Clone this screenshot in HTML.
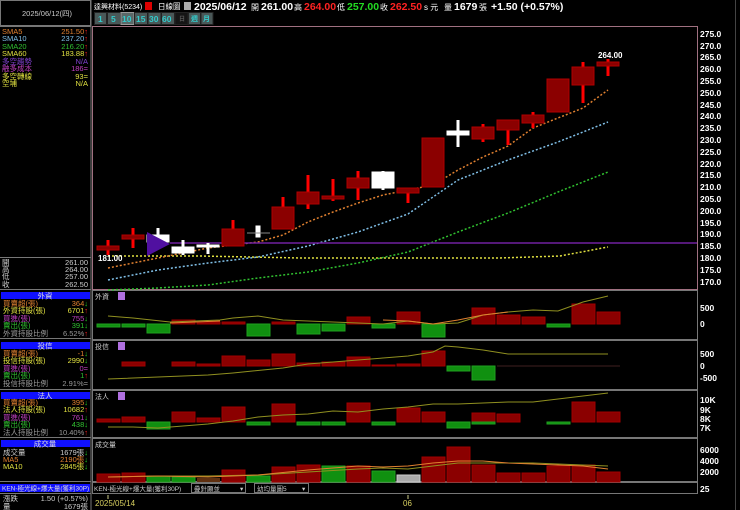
<!DOCTYPE html>
<html><head><meta charset="utf-8"><style>
html,body{margin:0;padding:0;background:#000;width:740px;height:510px;overflow:hidden}
svg{display:block}
text{font-family:"Liberation Sans","Noto Sans CJK TC",sans-serif}
.s{font-size:7.5px}
.ax{font-size:8.5px;fill:#fff;font-weight:bold}
</style></head><body>
<svg width="740" height="510" viewBox="0 0 740 510" xmlns="http://www.w3.org/2000/svg">
<rect width="740" height="510" fill="#000"/>
<!-- header -->
<text x="94" y="9" font-size="7" fill="#fff">達興材料(5234)</text>
<rect x="145" y="2" width="7" height="8" fill="#d00"/>
<text x="158" y="9" font-size="7.5" fill="#fff">日線圖</text>
<rect x="184" y="2" width="7" height="8" fill="#aaa"/>
<text x="194" y="10" font-size="10.5" font-weight="bold" fill="#fff">2025/06/12</text>
<text x="251" y="10" font-size="8" fill="#fff">開</text>
<text x="261" y="10" font-size="10.5" font-weight="bold" fill="#fff">261.00</text>
<text x="294" y="10" font-size="8" fill="#fff">高</text>
<text x="304" y="10" font-size="10.5" font-weight="bold" fill="#f22">264.00</text>
<text x="337" y="10" font-size="8" fill="#fff">低</text>
<text x="347" y="10" font-size="10.5" font-weight="bold" fill="#2d2">257.00</text>
<text x="380" y="10" font-size="8" fill="#fff">收</text>
<text x="390" y="10" font-size="10.5" font-weight="bold" fill="#f22">262.50</text>
<text x="424" y="10" font-size="8" fill="#fff">s 元</text>
<text x="444" y="10" font-size="8" fill="#fff">量</text>
<text x="454" y="10" font-size="10.5" font-weight="bold" fill="#fff">1679</text>
<text x="479" y="10" font-size="8" fill="#fff">張</text>
<text x="491" y="10" font-size="10.5" font-weight="bold" fill="#fff">+1.50 (+0.57%)</text>
<!-- buttons -->
<g font-size="8.5" font-weight="bold" fill="#3cc">
<rect x="94" y="12" width="119" height="13" fill="#3a4848"/>
<rect x="94.5" y="12.5" width="12" height="12" fill="#4a5858" stroke="#222"/><text x="98" y="22">1</text>
<rect x="107.5" y="12.5" width="13" height="12" fill="#4a5858" stroke="#222"/><text x="111" y="22">5</text>
<rect x="121" y="12.5" width="13" height="12" fill="#5a6868" stroke="#999"/><text x="122" y="22">10</text>
<rect x="134.5" y="12.5" width="13" height="12" fill="#4a5858" stroke="#222"/><text x="136" y="22">15</text>
<rect x="148" y="12.5" width="13" height="12" fill="#4a5858" stroke="#222"/><text x="149" y="22">30</text>
<rect x="161.5" y="12.5" width="13" height="12" fill="#4a5858" stroke="#222"/><text x="162" y="22">60</text>
<rect x="175" y="12.5" width="13" height="12" fill="#151515" stroke="#222"/><text x="179" y="21" font-size="6" fill="#555">日</text>
<rect x="188.5" y="12.5" width="12" height="12" fill="#4a5858" stroke="#222"/><text x="191" y="21" font-size="7">週</text>
<rect x="201" y="12.5" width="12" height="12" fill="#4a5858" stroke="#222"/><text x="203" y="21" font-size="7">月</text>
</g>
<!-- left panel frames -->
<g fill="none" stroke="#777" stroke-width="1">
<rect x="0.5" y="0.5" width="90" height="25"/>
<line x1="91" y1="0" x2="91" y2="510"/>
<line x1="0" y1="26.5" x2="91" y2="26.5"/>
<line x1="0" y1="257.5" x2="91" y2="257.5"/>
<line x1="0" y1="289.5" x2="91" y2="289.5"/>
<line x1="0" y1="338.5" x2="91" y2="338.5"/>
<line x1="0" y1="389.5" x2="91" y2="389.5"/>
<line x1="0" y1="437.5" x2="91" y2="437.5"/>
<line x1="0" y1="481.5" x2="91" y2="481.5"/>
<line x1="0" y1="493.5" x2="91" y2="493.5"/>
</g>
<text x="22" y="16" font-size="7.5" fill="#ccc">2025/06/12(四)</text>
<g class="s">
<text x="2" y="34" fill="#e08030">SMA5</text><text x="88" y="34" text-anchor="end" fill="#e08030">251.50<tspan fill="#f22">↑</tspan></text>
<text x="2" y="41" fill="#80c0e8">SMA10</text><text x="88" y="41" text-anchor="end" fill="#80c0e8">237.20<tspan fill="#f22">↑</tspan></text>
<text x="2" y="49" fill="#30c030">SMA20</text><text x="88" y="49" text-anchor="end" fill="#30c030">216.20<tspan fill="#f22">↑</tspan></text>
<text x="2" y="56" fill="#e0e040">SMA60</text><text x="88" y="56" text-anchor="end" fill="#e0e040">183.88<tspan fill="#f22">↑</tspan></text>
<text x="2" y="64" fill="#8040d0">多空趨勢</text><text x="88" y="64" text-anchor="end" fill="#8040d0">N/A</text>
<text x="2" y="71" fill="#c040c0">融多成本</text><text x="88" y="71" text-anchor="end" fill="#c040c0">186=</text>
<text x="2" y="79" fill="#e0e040">多空轉線</text><text x="88" y="79" text-anchor="end" fill="#e0e040">93=</text>
<text x="2" y="86" fill="#e0e040">空埔</text><text x="88" y="86" text-anchor="end" fill="#e0e040">N/A</text>
<text x="2" y="265" fill="#ccc">開</text><text x="88" y="265" text-anchor="end" fill="#ccc">261.00</text>
<text x="2" y="272" fill="#ccc">高</text><text x="88" y="272" text-anchor="end" fill="#ccc">264.00</text>
<text x="2" y="279" fill="#ccc">低</text><text x="88" y="279" text-anchor="end" fill="#ccc">257.00</text>
<text x="2" y="287" fill="#ccc">收</text><text x="88" y="287" text-anchor="end" fill="#ccc">262.50</text>
</g>
<g class="s">
<rect x="1" y="292" width="89" height="7" fill="#1010ff"/><text x="45" y="298.5" text-anchor="middle" fill="#ddd">外資</text>
<text x="3" y="306" fill="#e08030">買賣超(張)</text><text x="88" y="306" text-anchor="end" fill="#e08030">364<tspan fill="#2d2">↓</tspan></text>
<text x="3" y="313" fill="#e0e040">外資持股(張)</text><text x="88" y="313" text-anchor="end" fill="#e0e040">6701<tspan fill="#f22">↑</tspan></text>
<text x="3" y="321" fill="#c040c0">買進(張)</text><text x="88" y="321" text-anchor="end" fill="#c040c0">755<tspan fill="#2d2">↓</tspan></text>
<text x="3" y="328" fill="#30c030">賣出(張)</text><text x="88" y="328" text-anchor="end" fill="#30c030">391<tspan fill="#2d2">↓</tspan></text>
<text x="3" y="336" fill="#999">外資持股比例</text><text x="88" y="336" text-anchor="end" fill="#999">6.52%<tspan fill="#f22">↑</tspan></text>
<rect x="1" y="342" width="89" height="7" fill="#1010ff"/><text x="45" y="348.5" text-anchor="middle" fill="#ddd">投信</text>
<text x="3" y="356" fill="#e08030">買賣超(張)</text><text x="88" y="356" text-anchor="end" fill="#e08030">-1<tspan fill="#2d2">↓</tspan></text>
<text x="3" y="363" fill="#e0e040">投信持股(張)</text><text x="88" y="363" text-anchor="end" fill="#e0e040">2990<tspan fill="#2d2">↓</tspan></text>
<text x="3" y="371" fill="#c040c0">買進(張)</text><text x="88" y="371" text-anchor="end" fill="#c040c0">0=</text>
<text x="3" y="378" fill="#30c030">賣出(張)</text><text x="88" y="378" text-anchor="end" fill="#30c030">1<tspan fill="#f22">↑</tspan></text>
<text x="3" y="386" fill="#999">投信持股比例</text><text x="88" y="386" text-anchor="end" fill="#999">2.91%=</text>
<rect x="1" y="392" width="89" height="7" fill="#1010ff"/><text x="45" y="398.5" text-anchor="middle" fill="#ddd">法人</text>
<text x="3" y="405" fill="#e08030">買賣超(張)</text><text x="88" y="405" text-anchor="end" fill="#e08030">395<tspan fill="#2d2">↓</tspan></text>
<text x="3" y="412" fill="#e0e040">法人持股(張)</text><text x="88" y="412" text-anchor="end" fill="#e0e040">10682<tspan fill="#f22">↑</tspan></text>
<text x="3" y="420" fill="#c040c0">買進(張)</text><text x="88" y="420" text-anchor="end" fill="#c040c0">761<tspan fill="#2d2">↓</tspan></text>
<text x="3" y="427" fill="#30c030">賣出(張)</text><text x="88" y="427" text-anchor="end" fill="#30c030">438<tspan fill="#2d2">↓</tspan></text>
<text x="3" y="435" fill="#999">法人持股比例</text><text x="88" y="435" text-anchor="end" fill="#999">10.40%<tspan fill="#f22">↑</tspan></text>
<rect x="1" y="440" width="89" height="7" fill="#1010ff"/><text x="45" y="446.5" text-anchor="middle" fill="#ddd">成交量</text>
<text x="3" y="455" fill="#ccc">成交量</text><text x="88" y="455" text-anchor="end" fill="#ccc">1679張<tspan fill="#2d2">↓</tspan></text>
<text x="3" y="462" fill="#e08030">MA5</text><text x="88" y="462" text-anchor="end" fill="#e08030">2190張<tspan fill="#2d2">↓</tspan></text>
<text x="3" y="469" fill="#e0e040">MA10</text><text x="88" y="469" text-anchor="end" fill="#e0e040">2845張<tspan fill="#2d2">↓</tspan></text>
<rect x="0" y="484" width="90" height="8" fill="#1010ff"/><text x="2" y="490.5" font-size="6.5" fill="#ddd">KEN-極光線+爆大量(獲利30P)</text>
<text x="3" y="501" fill="#ccc">漲跌</text><text x="88" y="501" text-anchor="end" fill="#ccc">1.50 (+0.57%)</text>
<text x="3" y="509" fill="#ccc">量</text><text x="88" y="509" text-anchor="end" fill="#ccc">1679張</text>
</g>
<!-- chart frames -->
<g fill="none" stroke="#777">
<rect x="92.5" y="26.5" width="605" height="263" stroke="#a07080"/>
<rect x="92.5" y="290.5" width="605" height="49"/>
<rect x="92.5" y="340.5" width="605" height="49"/>
<rect x="92.5" y="390.5" width="605" height="47"/>
<rect x="92.5" y="438.5" width="605" height="43"/>
<rect x="92.5" y="482.5" width="605" height="11"/>
<line x1="735.5" y1="0" x2="735.5" y2="510" stroke="#444"/>
</g>
<!-- price axis -->
<g class="ax">
<text x="700" y="37">275.0</text><text x="700" y="49">270.0</text><text x="700" y="60">265.0</text><text x="700" y="72">260.0</text><text x="700" y="84">255.0</text><text x="700" y="96">250.0</text><text x="700" y="108">245.0</text><text x="700" y="119">240.0</text><text x="700" y="131">235.0</text><text x="700" y="143">230.0</text><text x="700" y="155">225.0</text><text x="700" y="167">220.0</text><text x="700" y="178">215.0</text><text x="700" y="190">210.0</text><text x="700" y="202">205.0</text><text x="700" y="214">200.0</text><text x="700" y="226">195.0</text><text x="700" y="237">190.0</text><text x="700" y="249">185.0</text><text x="700" y="261">180.0</text><text x="700" y="273">175.0</text><text x="700" y="285">170.0</text>
<text x="700" y="327">0</text><text x="700" y="311">500</text>
<text x="700" y="357">500</text><text x="700" y="369">0</text><text x="700" y="381">-500</text>
<text x="700" y="403">10K</text><text x="700" y="413">9K</text><text x="700" y="422">8K</text><text x="700" y="431">7K</text>
<text x="700" y="453">6000</text><text x="700" y="464">4000</text><text x="700" y="475">2000</text>
<text x="700" y="492">25</text>
</g>
<!-- MA lines -->
<g fill="none" stroke-width="1.5" stroke-dasharray="2 2">
<polyline stroke="#e0e040" points="108,256 200,256 300,258 400,258 500,258 560,256 608,247"/>
<polyline stroke="#30c030" points="108,290 158,288 208,285 258,278 308,272 358,263 408,252 458,232 508,213 558,192 608,172"/>
<polyline stroke="#80c0e8" points="108,280 158,270 208,263 258,257 308,246 358,232 408,214 458,180 508,160 558,142 608,122"/>
<polyline stroke="#e08030" points="108,268 158,258 208,248 258,242 283,235 308,222 333,212 358,203 383,195 408,190 433,185 458,170 483,157 508,146 533,128 558,118 583,108 608,90"/>
</g>
<line x1="170" y1="243" x2="697" y2="243" stroke="#7020a0" stroke-width="1.5"/>
<!-- candles -->
<g stroke="#f00" stroke-width="3">
<line x1="108" y1="240" x2="108" y2="255"/><line x1="133" y1="228" x2="133" y2="248"/>
<line x1="233" y1="220" x2="233" y2="246"/><line x1="283" y1="197" x2="283" y2="229"/>
<line x1="308" y1="175" x2="308" y2="209"/><line x1="333" y1="179" x2="333" y2="201"/>
<line x1="358" y1="171" x2="358" y2="200"/><line x1="408" y1="188" x2="408" y2="203"/>
<line x1="483" y1="124" x2="483" y2="142"/><line x1="508" y1="120" x2="508" y2="145"/>
<line x1="533" y1="112" x2="533" y2="128"/><line x1="583" y1="62" x2="583" y2="103"/>
<line x1="608" y1="59" x2="608" y2="76"/>
</g>
<g fill="#8b0000" stroke="#b00000">
<rect x="97" y="246" width="22" height="4"/><rect x="122" y="235" width="22" height="4"/>
<rect x="222" y="229" width="22" height="17"/><rect x="272" y="207" width="22" height="22"/>
<rect x="297" y="192" width="22" height="12"/><rect x="322" y="196" width="22" height="3"/>
<rect x="347" y="178" width="22" height="10"/><rect x="397" y="188" width="22" height="5"/>
<rect x="422" y="138" width="22" height="49"/><rect x="472" y="127" width="22" height="12"/>
<rect x="497" y="120" width="22" height="10"/><rect x="522" y="115" width="22" height="8"/>
<rect x="547" y="79" width="22" height="33"/><rect x="572" y="67" width="22" height="18"/>
<rect x="597" y="62" width="22" height="4"/>
</g>
<g fill="#fff" stroke="#fff">
<line x1="158" y1="228" x2="158" y2="244" stroke-width="3"/><rect x="147" y="235" width="22" height="7"/>
<line x1="183" y1="240" x2="183" y2="255" stroke-width="3"/><rect x="172" y="247" width="22" height="6"/>
<line x1="208" y1="243" x2="208" y2="254" stroke-width="3"/><rect x="197" y="245" width="22" height="2"/>
<rect x="256" y="226" width="4" height="11"/><line x1="247" y1="233" x2="270" y2="233" stroke="#888"/>
<line x1="383" y1="171" x2="383" y2="190" stroke-width="3"/><rect x="372" y="172" width="22" height="16"/>
<line x1="458" y1="120" x2="458" y2="147" stroke-width="3"/><rect x="447" y="131" width="22" height="4"/>
</g>
<polygon points="147,232 170,244 147,256" fill="#5010a0"/>
<text x="98" y="261" font-size="8" font-weight="bold" fill="#fff">181.00</text>
<text x="598" y="58" font-size="8" font-weight="bold" fill="#fff">264.00</text>
<!-- sub panel labels -->
<g font-size="7" fill="#ccc">
<text x="95" y="299">外資</text><rect x="118" y="292" width="7" height="8" fill="#b070e0"/>
<text x="95" y="349">投信</text><rect x="118" y="342" width="7" height="8" fill="#b070e0"/>
<text x="95" y="399">法人</text><rect x="118" y="392" width="7" height="8" fill="#b070e0"/>
<text x="95" y="447">成交量</text>
</g>
<!-- foreign -->
<g stroke-width="1">
<g fill="#8b0000" stroke="#a00000">
<rect x="172" y="320" width="23" height="4"/><rect x="197" y="322" width="23" height="2"/><rect x="222" y="322" width="23" height="2"/>
<rect x="272" y="322" width="23" height="2"/><rect x="347" y="317" width="23" height="7"/><rect x="397" y="312" width="23" height="12"/>
<rect x="472" y="308" width="23" height="16"/><rect x="497" y="315" width="23" height="9"/><rect x="522" y="317" width="23" height="7"/>
<rect x="572" y="304" width="23" height="20"/><rect x="597" y="312" width="23" height="12"/>
</g>
<g fill="#109010" stroke="#20a020">
<rect x="97" y="324" width="23" height="3"/><rect x="122" y="324" width="23" height="3"/><rect x="147" y="324" width="23" height="9"/>
<rect x="247" y="324" width="23" height="12"/><rect x="297" y="324" width="23" height="10"/><rect x="322" y="324" width="23" height="7"/>
<rect x="372" y="324" width="23" height="4"/><rect x="422" y="324" width="23" height="13"/><rect x="547" y="324" width="23" height="3"/>
</g>
<polyline fill="none" stroke="#909020" points="108,316 133,318 170,322 220,320 233,318 258,316 283,320 308,321 333,322 358,323 383,324 408,321 433,324 458,323 483,315 508,312 533,310 558,311 583,302 608,296"/>
<polyline fill="none" stroke="#e08030" points="170,323 220,321"/><polyline fill="none" stroke="#e08030" points="383,320 408,321 433,324 458,320 483,315 508,312"/>
</g>
<!-- trust -->
<g>
<g fill="#8b0000" stroke="#a00000">
<rect x="122" y="362" width="23" height="4"/><rect x="172" y="362" width="23" height="4"/><rect x="197" y="364" width="23" height="2"/>
<rect x="222" y="356" width="23" height="10"/><rect x="247" y="360" width="23" height="6"/><rect x="272" y="354" width="23" height="12"/>
<rect x="297" y="363" width="23" height="3"/><rect x="322" y="362" width="23" height="4"/><rect x="347" y="357" width="23" height="9"/>
<rect x="372" y="365" width="23" height="1"/><rect x="397" y="364" width="23" height="2"/><rect x="422" y="351" width="23" height="15"/>
</g>
<g fill="#109010" stroke="#20a020">
<rect x="447" y="366" width="23" height="5"/><rect x="472" y="366" width="23" height="14"/>
</g>
<line x1="497" y1="366" x2="620" y2="366" stroke="#402020"/>
<polyline fill="none" stroke="#909020" points="108,379 158,377 208,375 233,373 283,368 308,364 333,362 358,360 383,358 408,356 433,352 445,346 458,347 483,350 508,354 608,354"/>
</g>
<!-- institutional -->
<g>
<g fill="#8b0000" stroke="#a00000">
<rect x="97" y="419" width="23" height="3"/><rect x="122" y="417" width="23" height="5"/><rect x="172" y="412" width="23" height="10"/>
<rect x="197" y="418" width="23" height="4"/><rect x="222" y="407" width="23" height="15"/><rect x="272" y="404" width="23" height="18"/>
<rect x="347" y="403" width="23" height="19"/><rect x="397" y="408" width="23" height="14"/><rect x="422" y="412" width="23" height="10"/>
<rect x="472" y="413" width="23" height="9"/><rect x="497" y="414" width="23" height="8"/><rect x="572" y="402" width="23" height="20"/>
<rect x="597" y="412" width="23" height="10"/>
</g>
<g fill="#109010" stroke="#20a020">
<rect x="147" y="422" width="23" height="7"/><rect x="247" y="422" width="23" height="3"/><rect x="297" y="422" width="23" height="3"/>
<rect x="322" y="422" width="23" height="3"/><rect x="372" y="422" width="23" height="3"/><rect x="447" y="422" width="23" height="6"/>
<rect x="472" y="422" width="23" height="2"/><rect x="547" y="422" width="23" height="2"/>
</g>
<polyline fill="none" stroke="#909020" points="108,427 133,427 158,428 208,424 233,421 258,417 283,415 308,414 333,411 358,412 383,409 408,407 433,404 458,404 483,403 508,402 533,402 558,399 583,396 608,393"/>
</g>
<!-- volume -->
<g>
<g fill="#8b0000" stroke="#a00000">
<rect x="97" y="474" width="23" height="8"/><rect x="122" y="473" width="23" height="9"/><rect x="222" y="470" width="23" height="12"/>
<rect x="272" y="467" width="23" height="15"/><rect x="297" y="465" width="23" height="17"/><rect x="347" y="466" width="23" height="16"/>
<rect x="422" y="457" width="23" height="25"/><rect x="447" y="447" width="23" height="35"/><rect x="472" y="465" width="23" height="17"/>
<rect x="497" y="473" width="23" height="9"/><rect x="522" y="473" width="23" height="9"/><rect x="547" y="466" width="23" height="16"/>
<rect x="572" y="465" width="23" height="17"/><rect x="597" y="472" width="23" height="10"/>
</g>
<rect x="197" y="478" width="23" height="4" fill="#603010"/>
<g fill="#109010" stroke="#20a020">
<rect x="147" y="476" width="23" height="6"/><rect x="172" y="477" width="23" height="5"/><rect x="247" y="476" width="23" height="6"/>
<rect x="322" y="466" width="23" height="16"/><rect x="372" y="471" width="23" height="11"/>
</g>
<rect x="397" y="475" width="23" height="7" fill="#aaa" stroke="#ccc"/>
<polyline fill="none" stroke="#909020" points="108,477 158,476 208,476 258,475 308,472 358,469 383,468 408,469 433,466 458,463 483,463 508,463 533,463 558,464 583,465 608,466"/>
<polyline fill="none" stroke="#e08030" points="108,477 158,476 208,477 258,475 308,470 358,466 383,467 408,466 433,463 458,461 483,461 508,463 533,464 558,465 583,466 608,469"/>
</g>
<!-- bottom bar -->
<g font-size="6.5" fill="#ccc">
<text x="94" y="491">KEN-極光線+爆大量(獲利30P)</text>
<rect x="191.5" y="483.5" width="54" height="9" fill="none" stroke="#777"/><text x="194" y="491">疊針顯並</text><text x="240" y="491">▾</text>
<rect x="254.5" y="483.5" width="54" height="9" fill="none" stroke="#777"/><text x="257" y="491">幼均量圖5</text><text x="302" y="491">▾</text>
</g>
<line x1="108" y1="495" x2="108" y2="499" stroke="#cc8"/><line x1="408" y1="495" x2="408" y2="499" stroke="#cc8"/>
<text x="95" y="506" font-size="8" fill="#d8d060">2025/05/14</text>
<text x="403" y="506" font-size="8" fill="#d8d060">06</text>
</svg>
</body></html>
